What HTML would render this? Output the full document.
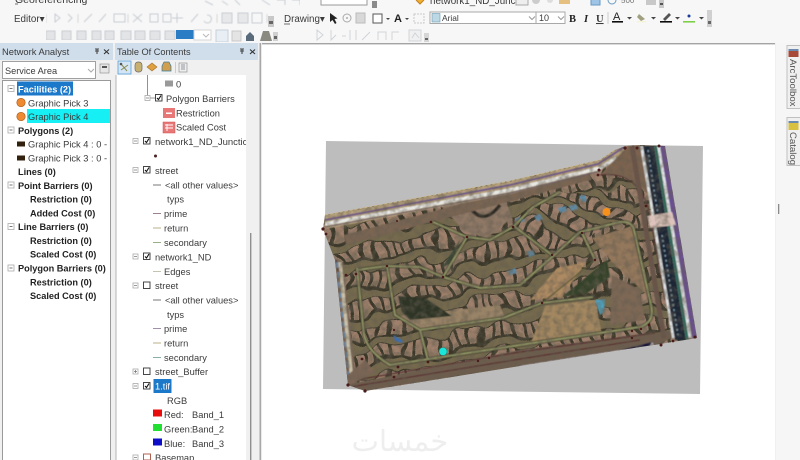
<!DOCTYPE html>
<html><head><meta charset="utf-8"><style>
html,body{margin:0;padding:0;background:#fff;width:800px;height:460px;overflow:hidden}
svg{display:block}
text{font-family:"Liberation Sans","DejaVu Sans",sans-serif;font-size:9.3px;fill:#3a3a3a}
.b{font-weight:bold;fill:#222;font-size:9.2px}
</style></head><body>
<svg width="800" height="460" viewBox="0 0 800 460" xmlns="http://www.w3.org/2000/svg">
<defs>
<filter id="s" x="0" y="0" width="100%" height="100%"><feGaussianBlur stdDeviation=".35"/></filter>
<filter id="s1" x="0" y="0" width="100%" height="100%"><feGaussianBlur stdDeviation=".6"/></filter>
<filter id="s2" x="-5%" y="-5%" width="110%" height="110%"><feGaussianBlur stdDeviation=".6"/></filter>
<filter id="w" x="-5%" y="-5%" width="110%" height="110%"><feTurbulence type="fractalNoise" baseFrequency=".035" numOctaves="2" seed="7" result="t"/><feDisplacementMap in="SourceGraphic" in2="t" scale="22" xChannelSelector="R" yChannelSelector="G"/></filter>
<filter id="n" x="0" y="0" width="100%" height="100%"><feTurbulence type="fractalNoise" baseFrequency=".16" numOctaves="2" seed="4"/><feColorMatrix values="0 0 0 0 .13  0 0 0 0 .11  0 0 0 0 .08  2.2 0 0 0 -.8"/></filter>
<clipPath id="ae"><path d="M325 215L510 181L600 160L615 150L626 146L640 145L665 146L697 338L660 344L640 347L520 366L365 391L348 385L335 260L323 229Z"/></clipPath>
<pattern id="h" width="11" height="26" patternUnits="userSpaceOnUse" patternTransform="rotate(-12 400 250)">
<rect width="11" height="26" fill="#3a372b"/>
<rect y="0" width="11" height="4" fill="#746a4e"/>
<rect x="1" y="5" width="7.500" height="14" fill="#9e806c"/>
<rect x="2" y="14" width="5" height="5" fill="#8a7460"/>
<rect y="22" width="11" height="4" fill="#746a4e"/>
</pattern>
<pattern id="h2" width="11" height="24" patternUnits="userSpaceOnUse" patternTransform="rotate(24 520 260)">
<rect width="11" height="24" fill="#38352a"/>
<rect y="0" width="11" height="4" fill="#746a4e"/>
<rect x="1" y="5" width="7.500" height="13" fill="#9e806c"/>
<rect y="20" width="11" height="4" fill="#746a4e"/>
</pattern>
</defs>

<!-- toolbar area -->
<rect width="800" height="43" fill="#f7f7f8"/>
<rect x="0" y="43" width="262" height="417" fill="#f0f0f0"/>
<rect x="775" y="43" width="25" height="417" fill="#f6f6f6"/>
<rect x="262" y="43" width="513" height="1.400" fill="#a4a4a4"/>
<g filter="url(#s)">
<text x="15" y="3" style="font-size:10.500px">Georeferencing</text>
<path d="M15 4H18" stroke="#333" stroke-width=".7"/>
<rect x="321" y="-2" width="46" height="7" fill="#fff" stroke="#9a9a9a"/>
<rect x="372" y="1" width="5" height="7" fill="#8a8a8a"/>
<text x="14" y="22" style="font-size:9.800px">Editor▾</text>
<text x="284" y="22" style="font-size:9.800px">Drawing▾</text>
<path d="M284 24H290" stroke="#333" stroke-width=".7"/>
</g>
<g filter="url(#s1)">
<g fill="none" stroke="#c8ccd0" stroke-width="1">
<path d="M205 1L213 5M222 1L228 5M235 0L240 5M262 0L270 5M277 0H285V5M292 0H300V5"/>
<path d="M55 14L60 18L55 22ZM68 14L72 18L68 22M84 22L92 14M99 22L106 14M114 14H125V22H114ZM133 14L142 22M142 14L133 22M150 14H158V22H150ZM163 14H171V22H163ZM177 13V23M172 18H183M191 22L198 14M207 15A4 4 0 1 1 204 21"/>
<rect x="222" y="13" width="10" height="10" fill="#e6e8ea"/><rect x="238" y="13" width="10" height="10" fill="#e6e8ea"/><rect x="252" y="13" width="10" height="10"/>
<path d="M46 14V23M78 14V23M128 14V23M217 14V23M267 14V23" stroke="#d8d8d8"/>
<path d="M46 31H55V40H46ZM62 31H71V40H62ZM77 31H86V40H77ZM92 31H101V40H92ZM105 31H114V40H105ZM121 31H131V40H121ZM135 31H145V40H135ZM150 31H160V40H150ZM165 31H175V40H165Z" fill="#e2e4e6"/>
</g>
</g>
<g filter="url(#s)">
<rect x="176" y="30" width="18" height="9" fill="#2a7bc4"/>
<rect x="194" y="30" width="17" height="10" fill="#fff" stroke="#d4d4d4"/>
<path d="M203 34L206 37L209 34" fill="none" stroke="#bbb"/>
<rect x="216" y="30" width="12" height="12" fill="#e8eef4" stroke="#c6d0da"/>
<rect x="232" y="31" width="9" height="10" fill="#e4e4e4" stroke="#c8c8c8"/>
<path d="M246 41V36L250 32L254 36V41Z" fill="#5a6c7c"/>
<path d="M260 41L263 31H269L272 41Z" fill="#8a8a80"/>
<rect x="268" y="16" width="6" height="11" fill="#c8c8c8"/><rect x="269" y="21" width="4" height="3" fill="#666"/>
<rect x="273" y="32" width="5" height="9" fill="#d0d0d0"/><rect x="274" y="36" width="3" height="3" fill="#666"/>
<!-- drawing -->
<path d="M330 13L330 22L332.500 20L335 24L336.500 23L334.500 19L337.500 18.500Z" fill="#222"/>
<circle cx="347" cy="18" r="4" fill="none" stroke="#aaa"/><circle cx="347" cy="18" r="1" fill="#aaa"/>
<rect x="356" y="13" width="9" height="10" fill="#d8d8d8" stroke="#bbb"/>
<rect x="373" y="14" width="9" height="9" fill="#fff" stroke="#555"/>
<path d="M386 18H390L388 20Z" fill="#444"/>
<text x="394" y="22" class="b" style="font-size:11px">A</text>
<path d="M405 18H409L407 20Z" fill="#444"/>
<rect x="414" y="14" width="10" height="9" fill="none" stroke="#c8c8c8" stroke-dasharray="2 1"/>
<g fill="none" stroke="#d0d4d8">
<path d="M317 30L323 35L317 40ZM331 30V40L336 35M342 36H346M350 30V40M356 30V40M362 40L370 32M378 40V32H386V40M392 40V32H399"/>
<rect x="409" y="30" width="12" height="11" fill="#f0f0f0"/>
<path d="M412 38L415 33L419 38"/>
</g>
<rect x="424" y="33" width="5" height="9" fill="#d6d6d6"/><rect x="425" y="38" width="3" height="2" fill="#666"/>
<path d="M416 0L420 4L424 0" fill="#f0b030" stroke="#c08020"/>
<text x="430" y="4" style="font-size:9.800px">network1_ND_Junctic</text>
<rect x="516" y="-2" width="12" height="7" fill="#eee" stroke="#aaa"/>
<circle cx="536" cy="0" r="4" fill="#ccc"/><circle cx="550" cy="0" r="3" fill="#ddd"/>
<path d="M559 -2H570V4H559Z" fill="#e6c080"/>
<rect x="591" y="-4" width="9" height="9" fill="#9ec4e6" stroke="#6a9ac4"/>
<circle cx="612" cy="0" r="4" fill="none" stroke="#6a9ac4"/>
<text x="621" y="3" style="font-size:8px;fill:#777">500</text>
<rect x="646" y="-2" width="10" height="7" fill="#c8c8c8"/>
<rect x="659" y="0" width="5" height="8" fill="#c8c8c8"/><rect x="660" y="3" width="3" height="2" fill="#555"/>
<rect x="430" y="12" width="106" height="11.500" fill="#fff" stroke="#a8a8a8"/>
<rect x="432" y="13.500" width="8" height="8.500" fill="#bcd8e4" stroke="#6a9ab0" stroke-width=".6"/>
<text x="442" y="21" style="font-size:8.400px">Arial</text>
<path d="M529 16.500L532 19.500L535 16.500" fill="none" stroke="#999"/>
<rect x="536" y="12" width="29" height="11.500" fill="#fff" stroke="#a8a8a8"/>
<text x="539" y="21" style="font-size:9px">10</text>
<path d="M558 16.500L561 19.500L564 16.500" fill="none" stroke="#999"/>
<text x="569" y="22" class="b" style="font-family:'Liberation Serif',serif;font-size:10.500px">B</text>
<text x="584" y="22" class="b" style="font-family:'Liberation Serif',serif;font-style:italic;font-size:10.500px">I</text>
<text x="596" y="22" style="font-family:'Liberation Serif',serif;font-size:10.500px;font-weight:bold;text-decoration:underline">U</text>
<path d="M608 12V24" stroke="#ccc"/>
<text x="613" y="20" style="font-size:11px;fill:#222">A</text><rect x="612" y="21" width="11" height="1.600" fill="#111"/>
<path d="M627 17H632L629.500 19.500Z" fill="#444"/>
<path d="M639 14L645 19L641 21L637 17Z" fill="#a0a080"/><rect x="637" y="21" width="9" height="1.300" fill="#f4f4d0"/>
<path d="M651 17H656L653.500 19.500Z" fill="#444"/>
<path d="M663 19L669 13L671 15L665 21Z" fill="#555"/><rect x="660" y="21" width="12" height="1.600" fill="#111"/>
<path d="M675 17H680L677.500 19.500Z" fill="#444"/>
<circle cx="689" cy="16" r="1.500" fill="#1a3a9a"/><rect x="683" y="21" width="12" height="1.600" fill="#7ed04a"/>
<path d="M699 17H704L701.500 19.500Z" fill="#444"/>
<rect x="707" y="10" width="5" height="17" fill="#d0d0d0"/><rect x="708" y="21" width="3" height="3" fill="#666"/>
</g>

<!-- panel headers -->
<rect x="0" y="43" width="113" height="17" fill="#d0deec"/>
<rect x="115" y="43" width="143" height="17" fill="#d0deec"/>
<g filter="url(#s)">
<text x="2" y="55" style="font-size:9.400px">Network Analyst</text>
<text x="117" y="55" style="font-size:9.200px">Table Of Contents</text>
<path d="M95 49H99M97 49V54M95 51H99" stroke="#444" stroke-width="1.100"/>
<path d="M104 49.500L109 54M109 49.500L104 54" stroke="#333" stroke-width="1.100"/>
<path d="M240 49H244M242 49V54M240 51H244" stroke="#444" stroke-width="1.100"/>
<path d="M250 49.500L255 54M255 49.500L250 54" stroke="#333" stroke-width="1.100"/>

<rect x="2.500" y="61.500" width="93" height="17" fill="#fff" stroke="#a0a0a0"/>
<text x="5" y="74" style="font-size:9.200px">Service Area</text>
<path d="M88 69L91 72L94 69" fill="none" stroke="#aaa"/>
<rect x="100" y="64" width="9" height="9" fill="#e6e6e6" stroke="#888" stroke-width=".6"/><rect x="102" y="66" width="5" height="2" fill="#555"/>
<rect x="2.500" y="80.500" width="108" height="385" fill="#fff" stroke="#9a9a9a"/>
<rect x="17" y="81.500" width="56" height="14" fill="#1f78c8"/>
<rect x="27" y="109" width="83" height="14" fill="#15f0f4"/>
<g fill="#fff" stroke="#aaa" stroke-width=".8"><rect x="8" y="85.500" width="6" height="6"/><rect x="8" y="127" width="6" height="6"/><rect x="8" y="182" width="6" height="6"/><rect x="8" y="223.500" width="6" height="6"/><rect x="8" y="265" width="6" height="6"/></g>
<path d="M9.500 88.500H12.500M9.500 130H12.500M9.500 185H12.500M9.500 226.500H12.500M9.500 268H12.500" stroke="#777"/>
<text x="18" y="92.500" class="b" style="fill:#fff">Facilities (2)</text>
<circle cx="21" cy="102.500" r="4.200" fill="#f08a30" stroke="#a86020" stroke-width=".7"/>
<circle cx="21" cy="116.500" r="4.200" fill="#f08a30" stroke="#a86020" stroke-width=".7"/>
<text x="28" y="106.500">Graphic Pick 3</text>
<text x="28" y="120">Graphic Pick 4</text>
<text x="18" y="134" class="b">Polygons (2)</text>
<rect x="17" y="141.500" width="8" height="5" fill="#33210f"/>
<rect x="17" y="155.500" width="8" height="5" fill="#33210f"/>
<text x="28" y="147.500">Graphic Pick 4 : 0 - 0</text>
<text x="28" y="161.500">Graphic Pick 3 : 0 - 0</text>
<rect x="109.500" y="135" width="5.500" height="30" fill="#f0f0f0"/>
<rect x="110" y="80" width="1" height="380" fill="#9a9a9a"/>
<text x="18" y="175" class="b">Lines (0)</text>
<text x="18" y="189" class="b">Point Barriers (0)</text>
<text x="30" y="202.500" class="b">Restriction (0)</text>
<text x="30" y="216.500" class="b">Added Cost (0)</text>
<text x="18" y="230" class="b">Line Barriers (0)</text>
<text x="30" y="244" class="b">Restriction (0)</text>
<text x="30" y="257.500" class="b">Scaled Cost (0)</text>
<text x="18" y="271.500" class="b">Polygon Barriers (0)</text>
<text x="30" y="285.500" class="b">Restriction (0)</text>
<text x="30" y="299" class="b">Scaled Cost (0)</text>

<!-- TOC -->
<rect x="116" y="75" width="130" height="385" fill="#fff"/>
<rect x="115.500" y="75" width="1" height="385" fill="#b4b4b4"/>
<rect x="118" y="61" width="13" height="13" fill="#d4e6f6" stroke="#5aa0d8" stroke-width=".8"/>
<path d="M121 64L127 71M121 70L128 65" stroke="#8a8a50"/><circle cx="121" cy="64" r="1.300" fill="#555"/>
<rect x="135" y="62" width="7" height="10" rx="3" fill="#c8b070" stroke="#6a6a6a" stroke-width=".7"/>
<path d="M147 67L152 63L157 67L152 71Z" fill="#e0a040" stroke="#a07030" stroke-width=".6"/>
<path d="M162 71H171V66L169 62H164L162 66Z" fill="#d0a050" stroke="#3a7aa0" stroke-width=".7"/>
<path d="M175.500 62V73" stroke="#ccc"/>
<rect x="179" y="63" width="8" height="9" fill="#eee" stroke="#888" stroke-width=".6"/><path d="M181 65H185M181 67H185M181 69H185" stroke="#778" stroke-width=".7"/>
<path d="M147.500 75V98M147.500 98H156" stroke="#777" stroke-width=".8" fill="none"/>
<rect x="165" y="80.500" width="8" height="6" fill="#999"/>
<text x="176" y="87.500">0</text>
<g fill="#fff" stroke="#aaa" stroke-width=".8">
<rect x="145" y="95.500" width="5" height="5"/><rect x="133" y="138.500" width="5" height="5"/><rect x="133" y="167.500" width="5" height="5"/><rect x="133" y="254" width="5" height="5"/><rect x="133" y="283" width="5" height="5"/><rect x="133" y="369" width="5" height="5"/><rect x="133" y="383.500" width="5" height="5"/><rect x="133" y="455" width="5" height="5"/>
</g>
<path d="M134 141H137M134 170H137M134 256.500H137M134 285.500H137M134 371.500H137M134 386H137M134 457.500H137M146 98H149M135.500 370V373" stroke="#777" stroke-width=".8"/>
<g fill="#fff" stroke="#333" stroke-width=".9">
<rect x="155.500" y="94.500" width="6.500" height="6.500"/><rect x="143.500" y="137.500" width="6.500" height="6.500"/><rect x="143.500" y="166.500" width="6.500" height="6.500"/><rect x="143.500" y="253" width="6.500" height="6.500"/><rect x="143.500" y="282" width="6.500" height="6.500"/><rect x="143.500" y="368" width="6.500" height="6.500"/><rect x="143.500" y="382.500" width="6.500" height="6.500"/>
</g>
<path d="M157 98L158.500 99.500L161 95.500M145 141L146.500 142.500L149 138.500M145 170L146.500 171.500L149 167.500M145 256.500L146.500 258L149 254M145 386L146.500 387.500L149 383.500" fill="none" stroke="#111" stroke-width="1.100"/>
<text x="166" y="102">Polygon Barriers</text>
<rect x="163" y="108" width="12" height="10" fill="#e87878"/><rect x="166" y="112.500" width="6" height="1.500" fill="#fff"/>
<text x="176" y="116.500">Restriction</text>
<rect x="163" y="122" width="12" height="11" fill="#e87878" stroke="#d05050" stroke-width=".5"/><path d="M165 125H173M165 128H173M167 124V131" stroke="#fff" stroke-width=".9"/>
<text x="176" y="130.500">Scaled Cost</text>
<text x="155" y="145" style="font-size:9.500px">network1_ND_Junction</text>
<rect x="246" y="75" width="13" height="385" fill="#f0f0f0"/>
<rect x="250" y="233" width="1.400" height="227" fill="#8f8f8f"/>
<rect x="259.500" y="43" width="1.600" height="417" fill="#a8a8a8"/>
<circle cx="155.500" cy="156" r="1.500" fill="#4a2020"/>
<text x="155" y="174">street</text>
<path d="M153 185H161" stroke="#777"/><text x="165" y="188.500">&lt;all other values&gt;</text>
<text x="167" y="202.500">typs</text>
<path d="M153 213.500H161" stroke="#9a8090"/><text x="164" y="217">prime</text>
<path d="M153 228H161" stroke="#b8b088"/><text x="164" y="231.500">return</text>
<path d="M153 242.500H161" stroke="#98b088"/><text x="164" y="246">secondary</text>
<text x="155" y="260.500">network1_ND</text>
<path d="M153 271.500H161" stroke="#c4c4b0"/><text x="164" y="275">Edges</text>
<text x="155" y="289">street</text>
<path d="M153 300H161" stroke="#777"/><text x="165" y="303.500">&lt;all other values&gt;</text>
<text x="167" y="318">typs</text>
<path d="M153 328.500H161" stroke="#a090a8"/><text x="164" y="332">prime</text>
<path d="M153 343H161" stroke="#b8b088"/><text x="164" y="346.500">return</text>
<path d="M153 357.500H161" stroke="#88b0a8"/><text x="164" y="361">secondary</text>
<text x="155" y="375">street_Buffer</text>
<rect x="153.500" y="379" width="18" height="14" fill="#1f78c8"/>
<text x="155" y="389.500" style="fill:#fff">1.tif</text>
<text x="167" y="404">RGB</text>
<rect x="153" y="409.500" width="9" height="7" fill="#e81010"/><text x="164" y="418">Red:</text><text x="192" y="418">Band_1</text>
<rect x="153" y="424" width="9" height="7" fill="#20e030"/><text x="164" y="432.500">Green:</text><text x="192" y="432.500">Band_2</text>
<rect x="153" y="438.500" width="9" height="7" fill="#0808c8"/><text x="164" y="447">Blue:</text><text x="192" y="447">Band_3</text>
<rect x="143.500" y="454" width="7" height="6" fill="#fff" stroke="#b06050"/>
<text x="155" y="461">Basemap</text>
</g>

<!-- map -->
<path d="M326 141L703 146L700 394L323 389Z" fill="#bdbdbd"/>
<g clip-path="url(#ae)">
<g filter="url(#w)">
<rect x="300" y="120" width="425" height="295" fill="url(#h)"/>
<path d="M515 227L560 192L630 185L634 225L580 232L552 255Z" fill="url(#h2)"/>
<path d="M443 277L467 237L490 240L513 227L552 255L520 285L480 288Z" fill="url(#h)"/>
</g>
<g filter="url(#s2)">
<!-- lots -->
<path d="M530 300L557 268L586 262L562 297Z" fill="#ad8a62"/>
<path d="M592 238L632 226L648 296L612 262Z" fill="#94785c"/>
<path d="M545 306L595 300L602 335L530 345Z" fill="#a28760"/>
<path d="M612 275L640 290L645 320L610 325Z" fill="#7e6754"/>
<path d="M440 205L505 198L512 218L487 238L465 232Z" fill="#8f7866"/>
<path d="M470 208Q484 226 500 205" fill="none" stroke="#24221b" stroke-width="3.500"/>
<path d="M400 316L500 305L505 318L420 330Z" fill="#9a8468"/>
<!-- margins -->
<path d="M336 262L350 384" fill="none" stroke="#7d6858" stroke-width="14"/>
<path d="M345 240L590 175" fill="none" stroke="#7a6553" stroke-width="10"/>
<!-- green patches and pools -->
<path d="M398 296L425 298L452 316L410 320L402 312Z" fill="#2f3428"/>
<path d="M562 297L607 260L610 277L587 293Z" fill="#34422c"/>
<path d="M440 270L460 240L452 262L436 272Z" fill="#3a4634"/>
<path d="M595 300L605 299L604 312L600 315Z" fill="#4fa0bc"/>
<path d="M393 335L402 340L403 343L395 341Z" fill="#3a70b8"/>
<path d="M515 219l8-3 2 5-7 2zM558 208l8-2 1 5-7 2zM569 206l7-2 2 5-7 2zM579 196l6-1 2 6-5 1zM534 216l6-2 3 5-6 2zM508 271l7 -3 2 5-7 2zM527 252l6-2 2 5-6 2z" fill="#5f8ca8"/>
<!-- roads -->
<g fill="none" stroke="#2e2e22" stroke-width="3.800" opacity=".8">
<path d="M357 268L364 335Q368 352 390 365L520 345L640 327Q655 322 651 305L634 230Q632 221 620 222"/>
<path d="M433 222L467 237L490 240L513 227L533 207L560 192M515 227L552 255M420 267L443 277L480 288L520 285L552 257L580 232L620 222M467 237L443 277M387 266L395 315L420 330L503 318L542 303L593 297M420 330L428 360M357 270L387 266L420 267M582 233L595 260"/>
</g>
<g fill="none" stroke="#8f9364" stroke-width="2">
<path d="M357 268L364 335Q368 352 390 365L520 345L640 327Q655 322 651 305L634 230Q632 221 620 222"/>
<path d="M433 222L467 237L490 240L513 227L533 207L560 192M515 227L552 255M420 267L443 277L480 288L520 285L552 257L580 232L620 222M467 237L443 277M387 266L395 315L420 330L503 318L542 303L593 297M420 330L428 360M357 270L387 266L420 267M582 233L595 260"/>
<path d="M595 260L542 303" stroke="#5c5a38" stroke-width="1.300"/>
</g>
<!-- brown bottom and side roads -->
<path d="M345 385L520 350L690 328L660 344L520 366L365 391Z" fill="#6e5d4e"/>
<path d="M350 381L520 352L655 333M350 387L520 359L640 340" fill="none" stroke="#5a3232" stroke-width="1.400"/>
<path d="M350 383L345 300L336 260" fill="none" stroke="#5a3a30" stroke-width="2"/>
<path d="M340 262L352 382" fill="none" stroke="#c8c0a8" stroke-width="3.500"/>
<path d="M337 262L349 382" fill="none" stroke="#6a8aa8" stroke-width="2" stroke-dasharray="6 4"/>
<path d="M342 380L365 360L375 372L350 385Z" fill="#7d6656"/>
<path d="M520 366L640 347L652 342L654 345L520 368Z" fill="#d8d4e4"/>
<path d="M620 350L652 342L650 346L625 350Z" fill="#16163a"/>
<!-- top strip -->
<path d="M325 215L510 181L600 160L615 150L626 146L622 156L600 171L510 194L325 229Z" fill="#b7a27c"/>
<path d="M325 220L510 185L598 164L612 155L624 147" fill="none" stroke="#6f5a8a" stroke-width="2"/>
<path d="M325 224L510 190L600 168L616 158" fill="none" stroke="#e8e8e4" stroke-width="3.500"/>
<path d="M325 227L510 193L600 171" fill="none" stroke="#6a5a70" stroke-width="1"/>
<!-- triangle junction -->
<path d="M600 175L628 146L642 146L655 205Q635 170 600 175Z" fill="#7c6350"/>
<path d="M600 175Q640 170 650 215L665 300" fill="none" stroke="#5a3535" stroke-width="1.200"/>
<!-- right strip -->
<path d="M632 146L664 338" fill="none" stroke="#6b5248" stroke-width="5"/>
<path d="M640 146L672 338L697 338L665 146Z" fill="#dfe2e4"/>
<path d="M643 146L675 340L686 340L654 146Z" fill="#1c2636"/>
<path d="M654 146L686 340L689 340L657 146Z" fill="#2f6a5a"/>
<path d="M660 146L692 338L697 338L665 146Z" fill="#6a4f92"/>
<path d="M647 216L672 212L676 225L650 228Z" fill="#dcc4bc"/>
<path d="M648 150L654 190L658 214" fill="none" stroke="#7c98a8" stroke-width="1.500" stroke-dasharray="2 3"/>
<path d="M662 235L678 335" fill="none" stroke="#7c98a8" stroke-width="1.500" stroke-dasharray="2 3"/>
</g>
<rect x="320" y="140" width="385" height="255" filter="url(#n)" opacity=".6"/>
</g>
<path d="M325 215L510 181L600 160L615 150" fill="none" stroke="#c8b488" stroke-width="1" stroke-dasharray="3 2"/>
<g fill="#4a1a1a" filter="url(#s)">
<circle cx="323" cy="229" r="1.600"/><circle cx="326" cy="234" r="1.400"/><circle cx="397" cy="221" r="1"/><circle cx="431" cy="222" r="1.300"/><circle cx="467" cy="237" r="1.300"/>
<circle cx="625" cy="148" r="1.600"/><circle cx="637" cy="148" r="1.500"/><circle cx="659" cy="146" r="1.500"/><circle cx="599" cy="170" r="1.500"/><circle cx="598" cy="175" r="1.400"/><circle cx="646" cy="206" r="1.400"/>
<circle cx="513" cy="227" r="1.300"/><circle cx="552" cy="255" r="1.200"/><circle cx="582" cy="233" r="1.200"/><circle cx="595" cy="260" r="1.200"/><circle cx="542" cy="303" r="1.200"/>
<circle cx="346" cy="275" r="1.300"/><circle cx="356" cy="274" r="1.300"/><circle cx="387" cy="266" r="1.300"/><circle cx="443" cy="277" r="1.300"/><circle cx="362" cy="359" r="1.400"/><circle cx="398" cy="367" r="1.400"/><circle cx="394" cy="330" r="1.100"/><circle cx="428" cy="362" r="1.400"/>
<circle cx="348" cy="385" r="1.600"/><circle cx="365" cy="391" r="1.600"/><circle cx="394" cy="377" r="1.400"/><circle cx="478" cy="361" r="1.200"/><circle cx="489" cy="358" r="1.200"/>
<circle cx="649" cy="325" r="1.300"/><circle cx="641" cy="329" r="1.200"/><circle cx="632" cy="331" r="1.200"/><circle cx="661" cy="345" r="1.500"/><circle cx="673" cy="341" r="1.400"/><circle cx="695" cy="337" r="1.500"/><circle cx="632" cy="338" r="1.200"/>
</g>
<circle cx="606.500" cy="212" r="4" fill="#f8901c" filter="url(#s)"/>
<circle cx="443" cy="351.500" r="4" fill="#1ce4d8" stroke="#108878" stroke-width=".5" filter="url(#s)"/>

<!-- watermark -->
<text x="400" y="451" text-anchor="middle" style="font-family:'DejaVu Sans',sans-serif;font-size:29px;fill:#eeeeee" direction="rtl">خمسات</text>

<!-- right tabs -->
<g filter="url(#s)">
<path d="M775.500 43V460" stroke="#eaeaea"/>
<rect x="787" y="45.500" width="14" height="63" fill="#f0f0f0" stroke="#c0c0c0"/>
<rect x="788.500" y="49" width="10" height="8" fill="#a84838"/><rect x="788.500" y="49" width="10" height="2" fill="#6a8ab0"/>
<text x="0" y="0" transform="translate(790,59) rotate(90)" style="font-size:9.600px;fill:#555">ArcToolbox</text>
<rect x="787" y="117.500" width="14" height="48" fill="#f0f0f0" stroke="#c0c0c0"/>
<rect x="788.500" y="121" width="10" height="9" fill="#d8c040"/><rect x="788.500" y="121" width="10" height="2" fill="#6a8ab0"/>
<text x="0" y="0" transform="translate(790,132) rotate(90)" style="font-size:9.600px;fill:#555">Catalog</text>
<rect x="778" y="204" width="1.300" height="10" fill="#8a8a8a"/>
</g>
</svg>
</body></html>
